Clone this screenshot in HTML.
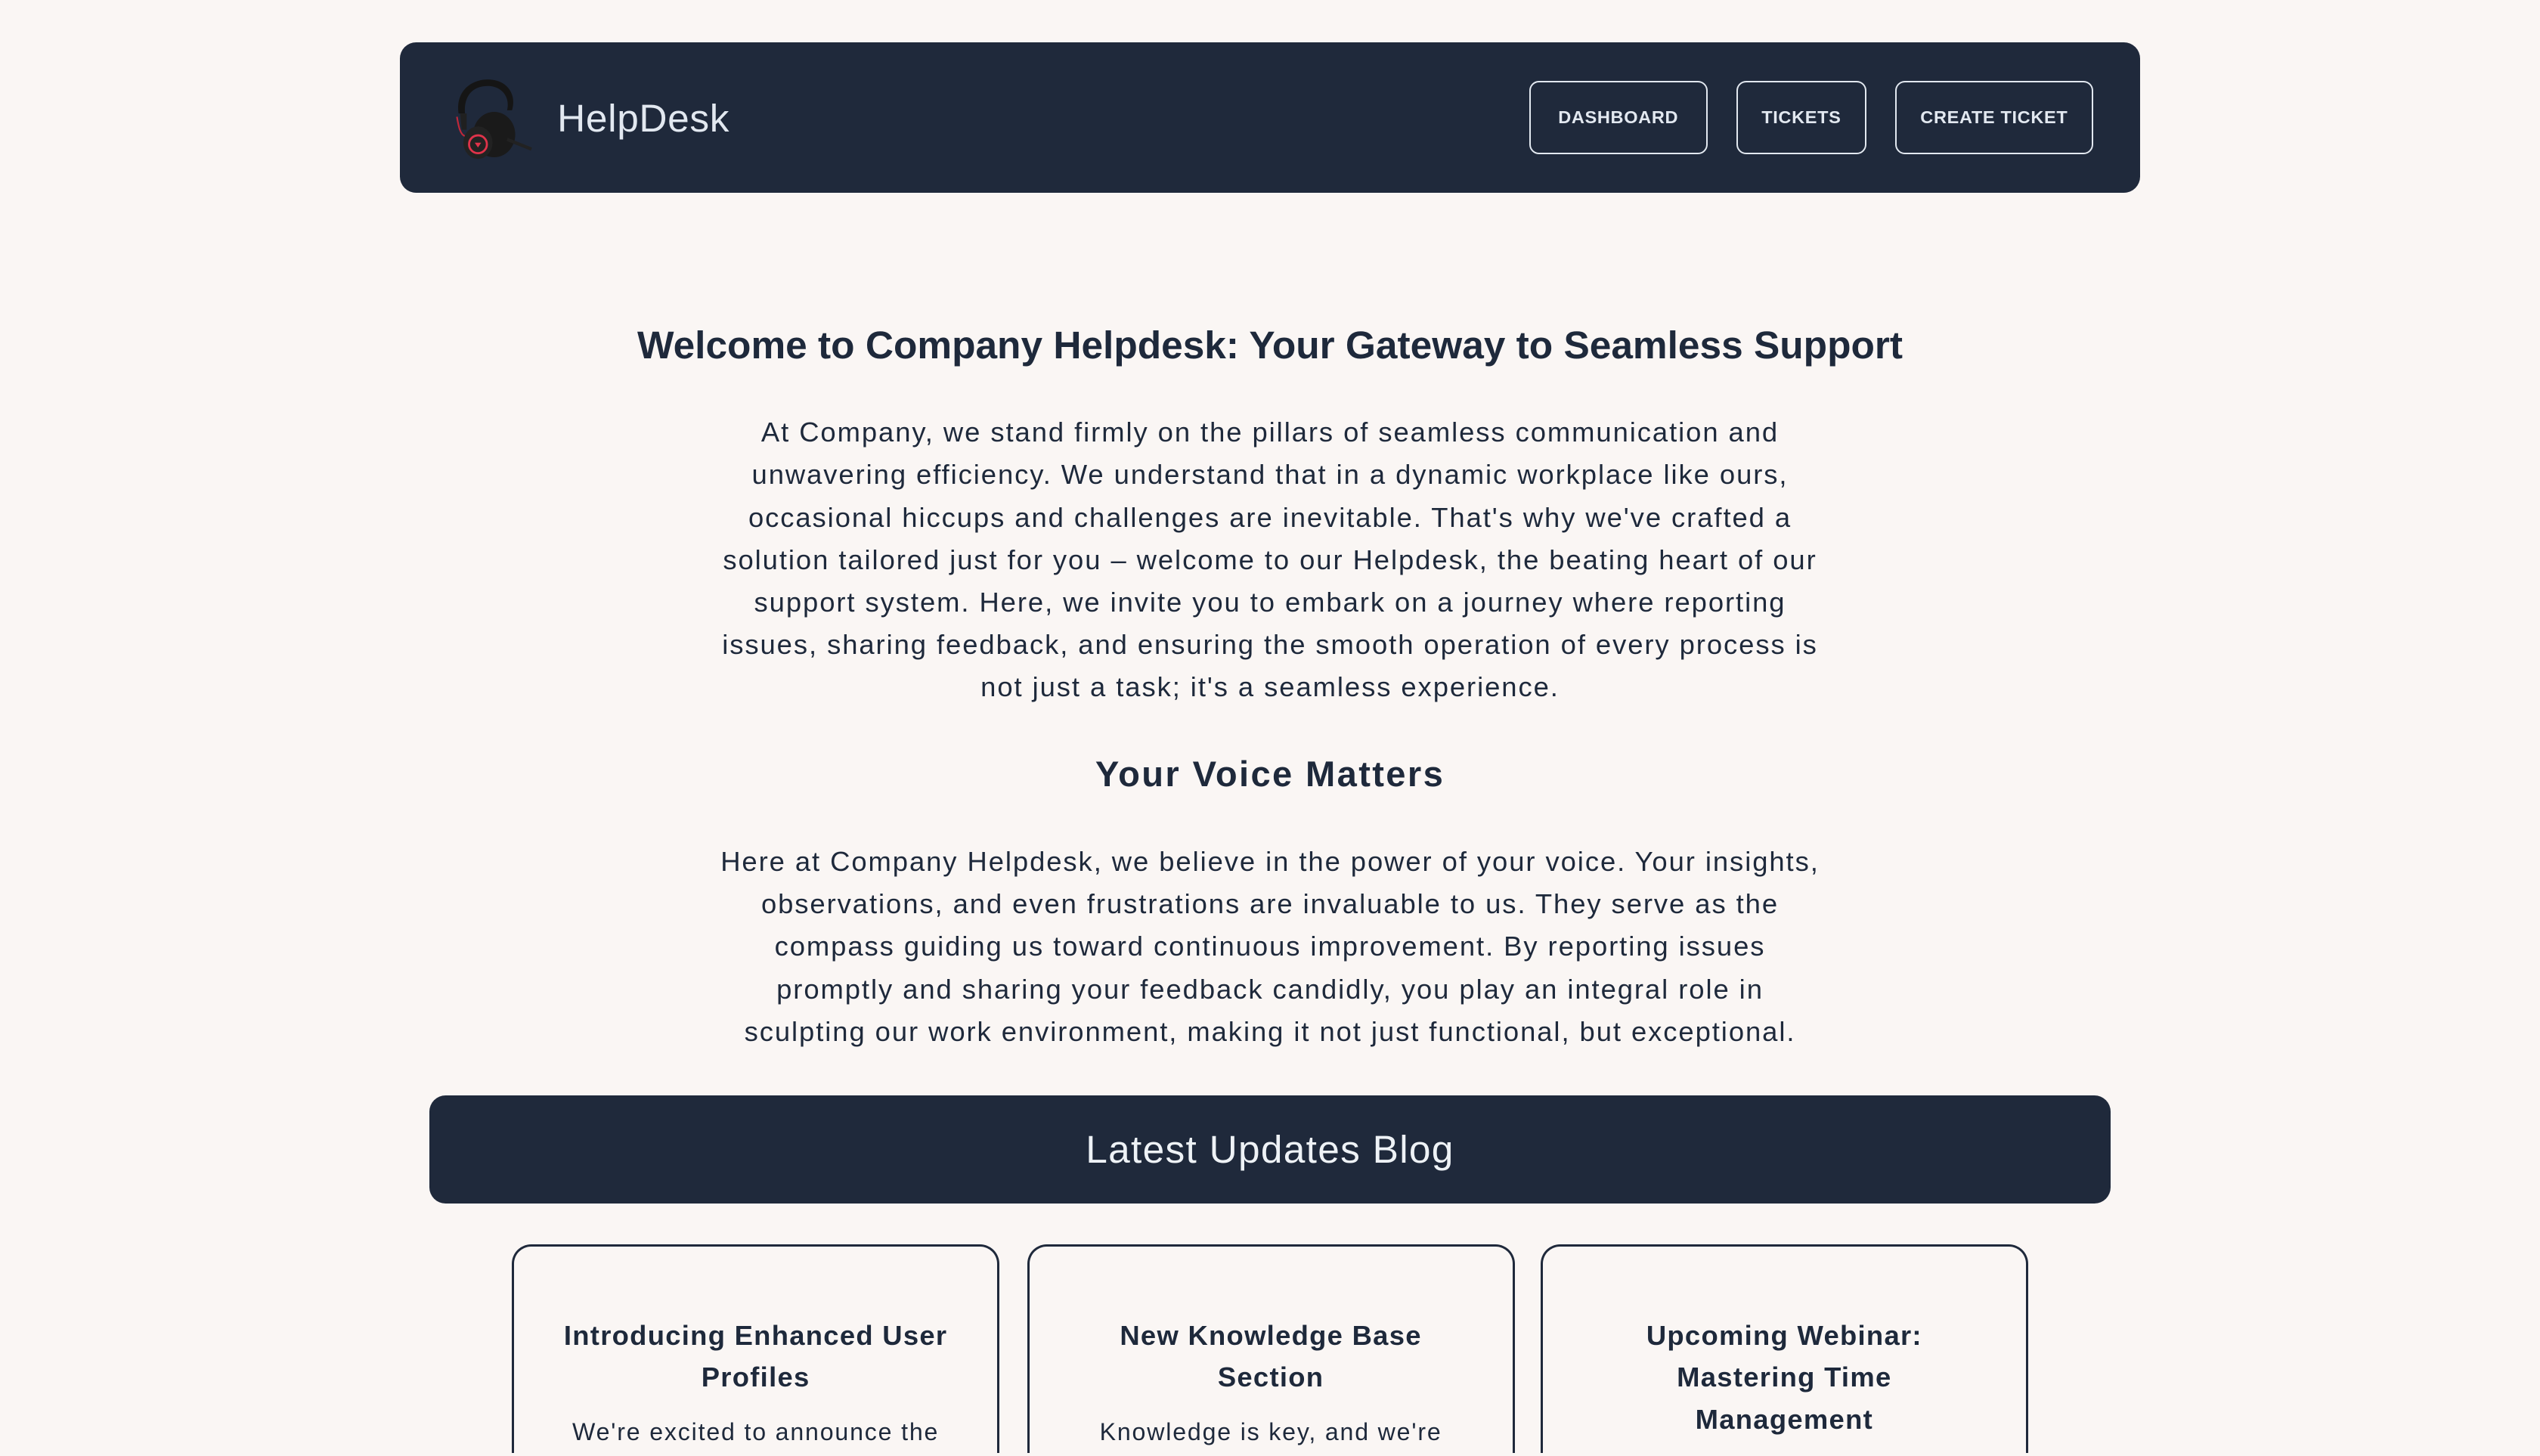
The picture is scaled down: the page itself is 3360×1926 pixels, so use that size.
<!DOCTYPE html>
<html><head><meta charset="utf-8"><style>
html{margin:0;padding:0;background:#faf6f4;width:3360px;height:1926px;overflow:hidden;}
body{margin:0;padding:0;background:#faf6f4;width:1568px;height:898px;overflow:hidden;zoom:2.142857;position:relative;font-family:"Liberation Sans",sans-serif;color:#1e293b;}
#w{position:absolute;left:0;top:0;width:1568px;height:898px;overflow:hidden;}
.hdr{position:absolute;left:247px;top:26px;width:1074px;height:93px;background:#1f293b;border-radius:10px;}
.brand{position:absolute;left:97px;top:33px;font-size:24px;color:#e2e8f0;letter-spacing:0.3px;}
.btn{position:absolute;top:24px;height:45px;border:1px solid #e2e8f0;border-radius:6px;color:#e2e8f0;font-size:11px;font-weight:bold;display:flex;align-items:center;justify-content:center;box-sizing:border-box;letter-spacing:0.3px;}
.c{position:absolute;left:0;width:1568px;text-align:center;}
h1,h2,p{margin:0;}
.p{font-size:17px;line-height:26.2px;letter-spacing:0.9px;}
.blog{position:absolute;left:265px;top:676px;width:1038px;height:67px;background:#1f293b;border-radius:10px;color:#eef2f6;font-size:24px;text-align:center;line-height:67px;letter-spacing:0.6px;}
.card{position:absolute;top:768px;width:301px;height:129px;border:1.5px solid #1f293b;border-bottom:none;border-radius:12px 12px 0 0;box-sizing:border-box;text-align:center;overflow:hidden;}
.card h3{margin:42px 0 0;font-size:17px;line-height:26px;font-weight:bold;letter-spacing:0.6px;}
.card p{font-size:15px;margin-top:12px;letter-spacing:0.85px;}
</style></head><body><div id="w">
<div class="hdr">
<svg style="position:absolute;left:32px;top:22px" width="54" height="52" viewBox="0 0 54 52">
<path d="M4 22 C2 8 12 1 22 1 C34 1 40 10 37 20 L34 20 C36 11 30 5 22 5 C13 5 7 11 8 22 Z" fill="#151515"/>
<path d="M5 22 L6 32 L9 32 L9 22 Z" fill="#202020"/>
<path d="M3 24 C4 30 5 35 8 36" stroke="#c0283a" stroke-width="1" fill="none"/>
<ellipse cx="26" cy="35" rx="13" ry="14" fill="#1a1a1a"/>
<ellipse cx="16" cy="40" rx="9" ry="10" fill="#222"/>
<circle cx="16" cy="41" r="5.5" fill="none" stroke="#e0334a" stroke-width="1.3"/>
<path d="M14 40 L18 40 L16 43 Z" fill="#e0334a"/>
<path d="M34 38 L49 44" stroke="#222" stroke-width="2"/>
</svg>
<div class="brand">HelpDesk</div>
<div class="btn" style="left:697px;width:110px">DASHBOARD</div>
<div class="btn" style="left:825px;width:80px">TICKETS</div>
<div class="btn" style="left:923px;width:122px">CREATE TICKET</div>
</div>
<h1 class="c" style="top:199px;font-size:24px;">Welcome to Company Helpdesk: Your Gateway to Seamless Support</h1>
<p class="c p" style="top:254px">At Company, we stand firmly on the pillars of seamless communication and<br>unwavering efficiency. We understand that in a dynamic workplace like ours,<br>occasional hiccups and challenges are inevitable. That's why we've crafted a<br>solution tailored just for you – welcome to our Helpdesk, the beating heart of our<br>support system. Here, we invite you to embark on a journey where reporting<br>issues, sharing feedback, and ensuring the smooth operation of every process is<br>not just a task; it's a seamless experience.</p>
<h2 class="c" style="top:465px;font-size:22px;letter-spacing:1.1px;">Your Voice Matters</h2>
<p class="c p" style="top:519px">Here at Company Helpdesk, we believe in the power of your voice. Your insights,<br>observations, and even frustrations are invaluable to us. They serve as the<br>compass guiding us toward continuous improvement. By reporting issues<br>promptly and sharing your feedback candidly, you play an integral role in<br>sculpting our work environment, making it not just functional, but exceptional.</p>
<div class="blog">Latest Updates Blog</div>
<div class="card" style="left:316px"><h3>Introducing Enhanced User<br>Profiles</h3><p>We're excited to announce the</p></div>
<div class="card" style="left:634px"><h3>New Knowledge Base<br>Section</h3><p>Knowledge is key, and we're</p></div>
<div class="card" style="left:951px"><h3>Upcoming Webinar:<br>Mastering Time<br>Management</h3></div>
</div></body></html>
